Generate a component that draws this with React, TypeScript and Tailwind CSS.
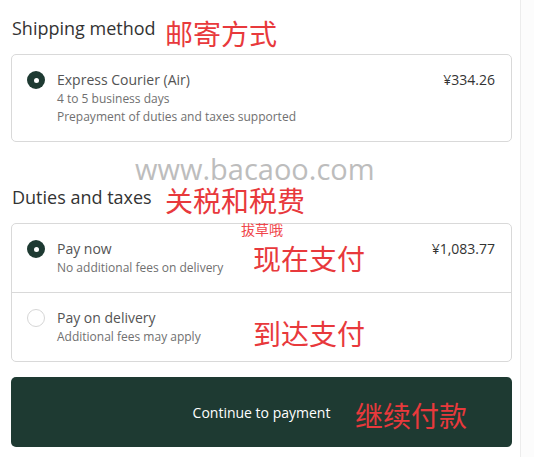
import React from "react";

const font = { fontFamily: '"Open Sans", "Noto Sans", sans-serif' };

function Radio({ checked }: { checked: boolean }) {
  return checked ? (
    <span className="flex h-[18px] w-[18px] shrink-0 items-center justify-center rounded-full bg-[#1e3a32]">
      <span className="h-[5px] w-[5px] rounded-full bg-white" />
    </span>
  ) : (
    <span className="h-[18px] w-[18px] shrink-0 rounded-full border border-[#d6d6d6] bg-white" />
  );
}

function Row({
  checked,
  title,
  lines,
  price,
}: {
  checked: boolean;
  title: string;
  lines: string[];
  price?: string;
}) {
  return (
    <div className="flex items-start px-[15px] pt-[15px] pb-[15px]">
      <div className="flex h-[20px] items-center">
        <Radio checked={checked} />
      </div>
      <div className="ml-[12px] flex flex-1 flex-col">
        <div className="text-[14px] leading-[20px] text-[#545454]">{title}</div>
        {lines.map((l) => (
          <div key={l} className="text-[12px] leading-[18px] text-[#707070]">
            {l}
          </div>
        ))}
      </div>
      {price && (
        <div className="pr-[1px] text-[14px] leading-[20px] text-[#333333]">{price}</div>
      )}
    </div>
  );
}

const cjk = { fontFamily: '"Noto Sans CJK SC", sans-serif' };

export default function App() {
  return (
    <div className="relative h-[457px] w-[534px] overflow-hidden bg-white" style={font}>
      <div className="absolute right-0 top-0 h-full w-[14px] border-l border-[#ececec] bg-[#fcfcfc]" />
      <div className="relative flex w-[512px] flex-col pl-[11px]">
        <h2 className="mt-[15px] h-[26px] pl-[1px] text-[18px] leading-[26px] text-[#333333]">
          Shipping method
        </h2>
        <div className="mt-[13px] rounded-[5px] border border-[#d9d9d9]">
          <Row
            checked
            title="Express Courier (Air)"
            lines={["4 to 5 business days", "Prepayment of duties and taxes supported"]}
            price="¥334.26"
          />
        </div>
        <h2 className="mt-[42px] h-[26px] pl-[1px] text-[18px] leading-[26px] text-[#333333]">
          Duties and taxes
        </h2>
        <div className="mt-[13px] flex flex-col rounded-[5px] border border-[#d9d9d9]">
          <Row
            checked
            title="Pay now"
            lines={["No additional fees on delivery"]}
            price="¥1,083.77"
          />
          <div className="h-px bg-[#d9d9d9]" />
          <Row checked={false} title="Pay on delivery" lines={["Additional fees may apply"]} />
        </div>
        <button className="mt-[15px] flex h-[70px] items-center justify-center rounded-[5px] bg-[#1e3a32] text-[14px] font-medium text-white">
          Continue to payment
        </button>
      </div>

      {/* overlay annotations */}
      <div className="absolute left-[135px] top-[155px] text-[29px] leading-[28px] text-[#bdbdbd]">
        www.bacaoo.com
      </div>
      <div className="absolute left-[165px] top-[15px] text-[28px] leading-[36px] text-[#e8393c]" style={cjk}>
        邮寄方式
      </div>
      <div className="absolute left-[165px] top-[185px] text-[28px] leading-[30px] text-[#e8393c]" style={cjk}>
        关税和税费
      </div>
      <div className="absolute left-[241px] top-[220px] text-[14px] leading-[18px] text-[#f0454a]" style={cjk}>
        拔草哦
      </div>
      <div className="absolute left-[253px] top-[240px] text-[28px] leading-[36px] text-[#e8393c]" style={cjk}>
        现在支付
      </div>
      <div className="absolute left-[253px] top-[315px] text-[28px] leading-[36px] text-[#e8393c]" style={cjk}>
        到达支付
      </div>
      <div className="absolute left-[355px] top-[397px] text-[28px] leading-[36px] text-[#e8393c]" style={cjk}>
        继续付款
      </div>
    </div>
  );
}
